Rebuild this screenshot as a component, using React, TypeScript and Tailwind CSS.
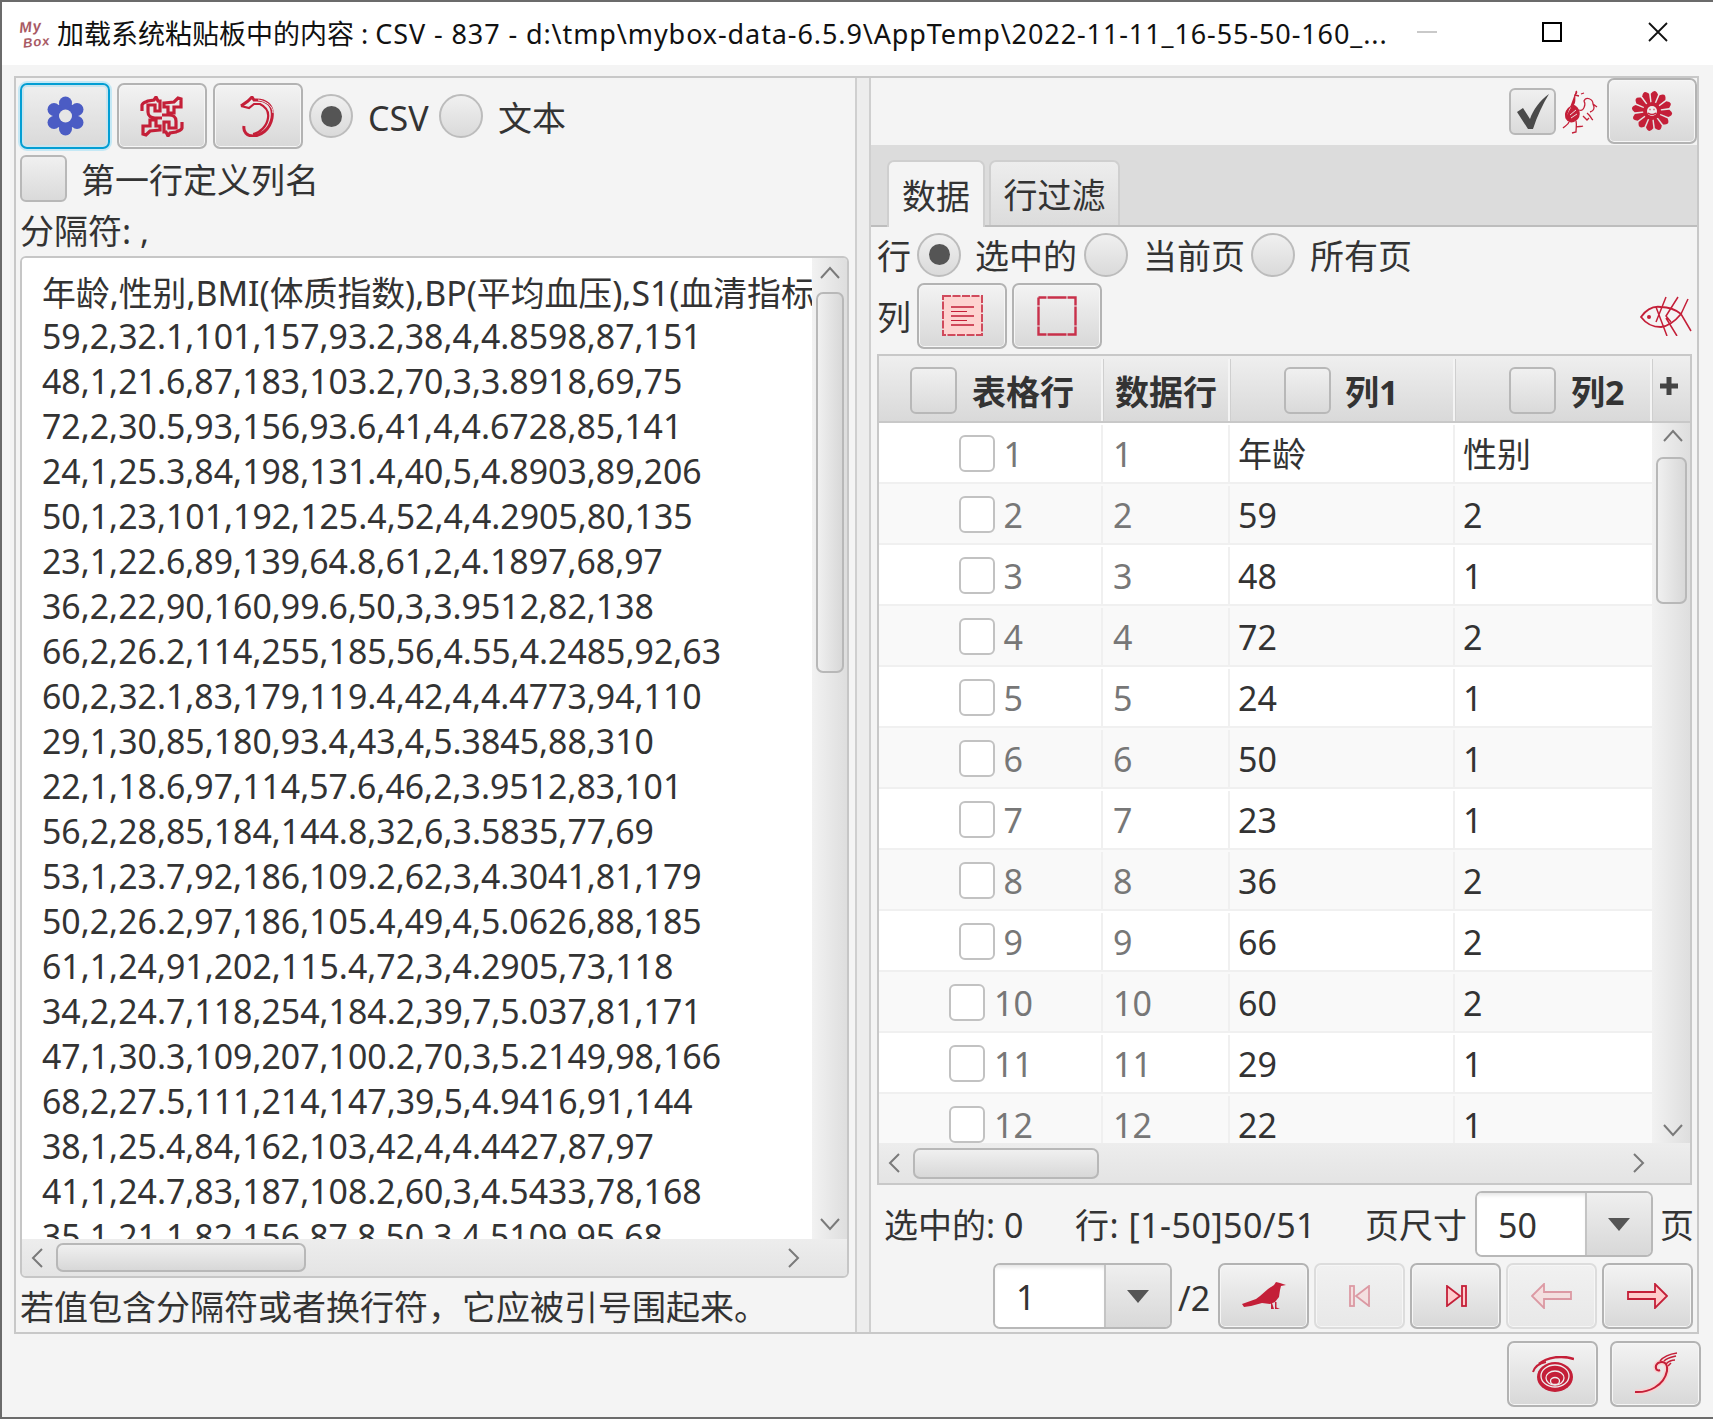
const RED = "#c41f38";

const csvLines = [
  "年龄,性别,BMI(体质指数),BP(平均血压),S1(血清指标,S2(低密度脂蛋白)",
  "59,2,32.1,101,157,93.2,38,4,4.8598,87,151",
  "48,1,21.6,87,183,103.2,70,3,3.8918,69,75",
  "72,2,30.5,93,156,93.6,41,4,4.6728,85,141",
  "24,1,25.3,84,198,131.4,40,5,4.8903,89,206",
  "50,1,23,101,192,125.4,52,4,4.2905,80,135",
  "23,1,22.6,89,139,64.8,61,2,4.1897,68,97",
  "36,2,22,90,160,99.6,50,3,3.9512,82,138",
  "66,2,26.2,114,255,185,56,4.55,4.2485,92,63",
  "60,2,32.1,83,179,119.4,42,4,4.4773,94,110",
  "29,1,30,85,180,93.4,43,4,5.3845,88,310",
  "22,1,18.6,97,114,57.6,46,2,3.9512,83,101",
  "56,2,28,85,184,144.8,32,6,3.5835,77,69",
  "53,1,23.7,92,186,109.2,62,3,4.3041,81,179",
  "50,2,26.2,97,186,105.4,49,4,5.0626,88,185",
  "61,1,24,91,202,115.4,72,3,4.2905,73,118",
  "34,2,24.7,118,254,184.2,39,7,5.037,81,171",
  "47,1,30.3,109,207,100.2,70,3,5.2149,98,166",
  "68,2,27.5,111,214,147,39,5,4.9416,91,144",
  "38,1,25.4,84,162,103,42,4,4.4427,87,97",
  "41,1,24.7,83,187,108.2,60,3,4.5433,78,168",
  "35,1,21.1,82,156,87.8,50,3,4.5109,95,68",
];

const tableRows = [
  ["年龄", "性别"],
  ["59", "2"],
  ["48", "1"],
  ["72", "2"],
  ["24", "1"],
  ["50", "1"],
  ["23", "1"],
  ["36", "2"],
  ["66", "2"],
  ["60", "2"],
  ["29", "1"],
  ["22", "1"],
];

function T({ children, className = "" }: { children: React.ReactNode; className?: string }) {
  return <span className={`pt-[3px] whitespace-nowrap ${className}`}>{children}</span>;
}

function Btn({
  children,
  focused,
  disabled,
  className = "",
}: {
  children?: React.ReactNode;
  focused?: boolean;
  disabled?: boolean;
  className?: string;
}) {
  let look = "border-[#b3b3b3] from-[#f3f3f3] to-[#d8d8d8] shadow-[inset_0_0_0_1px_#f6f6f6]";
  if (focused) look = "border-[#039ed3] from-[#efefef] to-[#d9d9d9] shadow-[0_0_0_2px_#c4e8f5,inset_0_0_0_2px_#c9e4ee]";
  if (disabled) look = "border-[#dcdcdc] from-[#f1f1f1] to-[#e8e8e8] shadow-[inset_0_0_0_1px_#f6f6f6]";
  return (
    <div className={`w-[91px] h-[66px] shrink-0 flex items-center justify-center rounded-[7px] border-[2.5px] bg-linear-to-b ${look} ${className}`}>
      <div className={disabled ? "opacity-40 flex" : "flex"}>{children}</div>
    </div>
  );
}

function Radio({ on }: { on?: boolean }) {
  return (
    <div className="w-[44px] h-[44px] shrink-0 rounded-full border-2 border-[#bcbcbc] bg-linear-to-b from-[#f0f0f0] to-[#dadada] flex items-center justify-center">
      {on && <div className="w-[21px] h-[21px] rounded-full bg-[#555555]" />}
    </div>
  );
}

function Check({ children, small, white }: { children?: React.ReactNode; small?: boolean; white?: boolean }) {
  return (
    <div
      className={`shrink-0 flex items-center justify-center border-2 rounded-[6px] ${small ? "w-[36px] h-[37px] border-[#c2c2c2]" : "w-[47px] h-[47px] border-[#b8b8b8]"} ${white ? "bg-white" : "bg-linear-to-b from-[#f0f0f0] to-[#dadada]"}`}
    >
      {children}
    </div>
  );
}

function Chevron({ dir }: { dir: "up" | "down" | "left" | "right" }) {
  const pts = {
    up: "1,12 10,2 19,12",
    down: "1,2 10,12 19,2",
    left: "12,1 3,10 12,19",
    right: "3,1 12,10 3,19",
  }[dir];
  const horizontal = dir === "left" || dir === "right";
  return (
    <svg width={horizontal ? 15 : 20} height={horizontal ? 20 : 14} viewBox={horizontal ? "0 0 15 20" : "0 0 20 14"} fill="none">
      <polyline points={pts} stroke="#7a7a7a" strokeWidth="2" />
    </svg>
  );
}

function Caret() {
  return (
    <svg width="24" height="14" viewBox="0 0 24 14">
      <polygon points="1,1 23,1 12,14" fill="#555555" />
    </svg>
  );
}

function Combo({ value, boxW }: { value: string; boxW: string }) {
  return (
    <div className={`h-[66px] flex rounded-[7px] border-2 border-[#b8b8b8] overflow-hidden ${boxW}`}>
      <div className="flex-1 bg-white pl-[21px] pt-[2px] flex items-center border-r-2 border-[#c4c4c4] shadow-[inset_0_4px_4px_-2px_#e2e2e2]">{value}</div>
      <div className="w-[64px] bg-linear-to-b from-[#efefef] to-[#d8d8d8] flex items-center justify-center">
        <Caret />
      </div>
    </div>
  );
}

function Gear() {
  return (
    <svg width="37" height="40" viewBox="0 0 37 40">
      <g fill="#4b5cc4">
        <circle cx="18.5" cy="20" r="13" />
        <circle cx="18.5" cy="7" r="6.5" />
        <circle cx="18.5" cy="33" r="6.5" />
        <circle cx="7" cy="13.5" r="6.5" />
        <circle cx="30" cy="13.5" r="6.5" />
        <circle cx="7" cy="26.5" r="6.5" />
        <circle cx="30" cy="26.5" r="6.5" />
      </g>
      <circle cx="18.5" cy="20" r="6.5" fill="#e6e6e6" />
    </svg>
  );
}

function Swirl() {
  const half = (
    <g>
      <path d="M2 15 L2 9 C3 6 6 6 8 5 L14 4 L16 1 L18 5 L20 5 L20 15 L15 15 L15 9 L8 9 L8 16 C8 20 11 22 15 22 L22 22" />
      <path d="M24 7 L34 6 L38 2 L41 3 L41 11 L34 11 L34 17 L28 17 L28 11 L24 11 Z" />
    </g>
  );
  return (
    <svg width="44" height="41" viewBox="0 0 44 41" fill="none" stroke={RED} strokeWidth="3.2">
      {half}
      <g transform="rotate(180 22 20.5)">{half}</g>
    </svg>
  );
}

function Dragon() {
  return (
    <svg width="36" height="41" viewBox="0 0 36 41" fill="none">
      <path d="M1 10 L8 5 L12 1 L14 4 C26 3 34 9 32 22 C30 34 20 40 13 40 C7 40 3 36 4 30" stroke={RED} strokeWidth="3" />
      <path d="M1 10 L9 12 L14 8 L20 8 C26 11 29 16 28 22 C27 30 20 37 13 38" stroke={RED} strokeWidth="2.2" />
      <path d="M18 4 C26 5 33 10 33 17" stroke="#eeeeee" strokeWidth="1" />
    </svg>
  );
}

function Flower() {
  const petals = Array.from({ length: 12 }, (_, i) => i * 30 + 8);
  return (
    <svg width="46" height="44" viewBox="0 0 46 44">
      {petals.map((a) => (
        <path key={a} transform={`rotate(${a} 23 22)`} d="M21.8 15 L19.3 5 Q23 -1.5 26.7 5 L24.2 15 Z" fill={RED} />
      ))}
      <circle cx="23" cy="22" r="9" fill={RED} />
      <circle cx="23" cy="22" r="5" fill="#ececec" />
      <path d="M19 24 Q23 27 27 24 M20.5 20.5 H21.5 M24.5 20.5 H25.5" stroke={RED} strokeWidth="1.4" fill="none" />
    </svg>
  );
}

function Rooster() {
  return (
    <svg width="36" height="44" viewBox="0 0 36 44" fill="none" stroke={RED} strokeWidth="1.3">
      <path d="M4 28 C2 22 6 18 11 15 C14 12 12 8 13 5 C15 3 15 2 14 1 M13 5 L17 6 M11 15 C18 18 19 26 14 30 C10 33 6 32 4 28 Z" fill={RED} />
      <path d="M8 25 L14 20 M9 28 L15 24" stroke="#f4f4f4" strokeWidth="0.9" />
      <path d="M17 20 C22 22 24 14 22 11 C24 6 31 9 31 14 C33 18 32 21 28 22 M31 14 L35 17 M25 23 C29 26 29 29 31 30 M21 26 L25 30 L27 28" />
      <path d="M14 31 C15 35 14 38 14 42 L10 43 M14 37 C17 36 19 37 21 36 M7 32 C6 35 3 36 1 38 M19 4 L22 3" />
    </svg>
  );
}

function ListIcon() {
  return (
    <svg width="41" height="41" viewBox="0 0 41 41">
      <rect x="1" y="1" width="39" height="39" fill="#fdd3d0" stroke="#d04a5c" strokeWidth="2" strokeDasharray="8 1.5" />
      <path d="M9 12 H32 M9 21 H32 M9 30 H32" stroke="#d04a5c" strokeWidth="2" />
      <path d="M9 16.5 H25 M9 25.5 H25" stroke={RED} strokeWidth="1" />
    </svg>
  );
}

function EmptyIcon() {
  return (
    <svg width="40" height="40" viewBox="0 0 40 40">
      <rect x="1.5" y="1.5" width="37" height="37" fill="none" stroke="#c8304a" strokeWidth="2.4" strokeDasharray="8 1 19 1 16 1 19 1 16 1 19 1 16 1 19 1 8 0" />
    </svg>
  );
}

function Fish() {
  return (
    <svg width="52" height="40" viewBox="0 0 52 40" fill="none" stroke={RED} strokeWidth="1.5">
      <path d="M1 21 C8 11 15 10 21 11 C30 11 36 14 41 18 C36 24 30 30 21 31 C13 31 7 29 1 21 Z" strokeWidth="1.8" />
      <circle cx="9" cy="21" r="2" fill={RED} stroke="none" />
      <path d="M26 1 L16 26 M38 1 L26 20 L31 26 M48 3 L41 18 M16 11 L27 40 M26 22 L37 40 M41 18 L51 35" />
    </svg>
  );
}

function Bird() {
  return (
    <svg width="44" height="29" viewBox="0 0 44 29" fill={RED}>
      <path d="M0 22 L14 17 L18 14 L26 7 L32 3 L34 0 L38 1 L44 3 L39 4 L38 8 L37 15 L33 20 L28 22 L20 21 L9 24 L2 25 Z" />
      <path d="M29 21 L29 27 L32 27 L30 21 Z M33 20 L33 27 L38 27 L34.5 25.5 L34.5 20 Z" />
    </svg>
  );
}

function FirstIcon() {
  return (
    <svg width="22" height="22" viewBox="0 0 22 22" fill="#fcc" stroke={RED} strokeWidth="1.8">
      <rect x="1" y="1" width="4" height="20" />
      <polygon points="20,1 20,21 7,11" />
    </svg>
  );
}

function LastIcon() {
  return (
    <svg width="22" height="22" viewBox="0 0 22 22" fill="#fcc" stroke={RED} strokeWidth="1.8">
      <polygon points="2,1 2,21 15,11" />
      <rect x="17" y="1" width="4" height="20" />
    </svg>
  );
}

function ArrowIcon({ left }: { left?: boolean }) {
  return (
    <svg width="41" height="26" viewBox="0 0 41 26" fill="#fcc" stroke={RED} strokeWidth="1.8">
      <polygon points={left ? "1,13 13,1 13,9 40,9 40,16 13,16 13,25" : "40,13 28,1 28,9 1,9 1,16 28,16 28,25"} />
    </svg>
  );
}

function Shell() {
  return (
    <svg width="42" height="37" viewBox="0 0 42 37" fill="none" stroke={RED}>
      <path d="M42 3 C30 -1 15 1 7 8" strokeWidth="2.5" />
      <ellipse cx="23" cy="21" rx="18" ry="15" fill={RED} stroke="none" />
      <path d="M1 16 C3 10 8 7 14 6" strokeWidth="2" />
      <ellipse cx="23" cy="20" rx="14" ry="11" stroke="#eeeeee" strokeWidth="1.3" />
      <ellipse cx="23" cy="22" rx="9" ry="7" stroke="#eeeeee" strokeWidth="1.3" />
      <ellipse cx="23" cy="25" rx="4.5" ry="3.5" stroke="#eeeeee" strokeWidth="1.3" />
    </svg>
  );
}

function Curl() {
  const stem = "M1 40 C14 41 30 34 33 19 C34 10 29 9 24 11 C20 14 22 20 26 18";
  return (
    <svg width="44" height="44" viewBox="0 0 44 44" fill="none">
      <path d={stem} stroke="#fbd0d0" strokeWidth="5" />
      <path d={stem} stroke={RED} strokeWidth="2" />
      <path d="M26 9 C30 4 36 2 43 1 M30 9 C33 6 38 5 42 4 M32 12 C35 9 38 8 41 8 M34 14 L37 11" stroke={RED} strokeWidth="1.5" />
    </svg>
  );
}

function VBar({ thumbH, thumbW, topPad, bottomPad, arrowX = "" }: { thumbH: string; thumbW: string; topPad: string; bottomPad: string; arrowX?: string }) {
  return (
    <div className="h-full bg-linear-to-r from-[#f2f2f2] to-[#dedede] flex flex-col items-center">
      <div className={`h-[26px] flex justify-center ${topPad} ${arrowX}`}>
        <Chevron dir="up" />
      </div>
      <div className={`mt-[8px] ${thumbH} ${thumbW} shrink-0 rounded-[7px] border-2 border-[#b8b8b8] bg-linear-to-r from-[#f0f0f0] to-[#d8d8d8]`} />
      <div className={`mt-auto flex justify-center ${bottomPad} ${arrowX}`}>
        <Chevron dir="down" />
      </div>
    </div>
  );
}

function HBar({ thumbW, thumbH, rightPad }: { thumbW: string; thumbH: string; rightPad: string }) {
  return (
    <div className={`h-full bg-linear-to-b from-[#ededed] to-[#e4e4e4] flex items-center pl-[8px] ${rightPad}`}>
      <Chevron dir="left" />
      <div className={`ml-[11px] ${thumbW} ${thumbH} rounded-[7px] border-2 border-[#b8b8b8] bg-linear-to-b from-[#f0f0f0] to-[#d8d8d8]`} />
      <div className="ml-auto flex">
        <Chevron dir="right" />
      </div>
    </div>
  );
}

function LeftPane() {
  return (
    <div className="w-[839px] shrink-0 pl-[4px] pt-[5px] flex flex-col">
      <div className="h-[66px] flex items-center">
        <Btn focused className="w-[90px]!">
          <Gear />
        </Btn>
        <Btn className="ml-[7px] w-[90px]!">
          <Swirl />
        </Btn>
        <Btn className="ml-[6px] w-[90px]!">
          <Dragon />
        </Btn>
        <div className="ml-[6px]">
          <Radio on />
        </div>
        <T className="ml-[15px] w-[71px]">CSV</T>
        <Radio />
        <T className="ml-[15px]">文本</T>
      </div>
      <div className="mt-[6px] h-[47px] flex items-center">
        <Check />
        <T className="ml-[14px]">第一行定义列名</T>
      </div>
      <div className="h-[54px] flex items-center pt-[4px]">分隔符: ,</div>
      <div className="w-[829px] h-[1022px] rounded-[6px] border-2 border-[#c6c6c6] overflow-hidden flex flex-col">
        <div className="h-[981px] flex">
          <div className="w-[790px] bg-white pl-[20px] pt-[11px] overflow-hidden whitespace-nowrap text-[33.85px] leading-[45px]">
            {csvLines.map((line, i) => (
              <div key={i} className={i === 0 ? "h-[45px] pt-[2px]" : ""}>
                {line}
              </div>
            ))}
          </div>
          <div className="w-[35px]">
            <VBar thumbH="h-[381px]" thumbW="w-[28px]" topPad="pt-[8px]" bottomPad="pb-[8px]" />
          </div>
        </div>
        <div className="h-[39px]">
          <HBar thumbW="w-[250px]" thumbH="h-[29px]" rightPad="pr-[46px]" />
        </div>
      </div>
      <div className="h-[54px] flex items-center pt-[4px]">若值包含分隔符或者换行符，它应被引号围起来。</div>
    </div>
  );
}

function HeadCell({ className, children }: { className: string; children: React.ReactNode }) {
  return (
    <div className={`h-full shrink-0 flex items-center border-r-2 border-[#f4f4f4] shadow-[1px_0_0_#cfcfcf] font-bold ${className}`}>
      {children}
    </div>
  );
}

function DataTable() {
  return (
    <div className="ml-[6px] mt-[6px] w-[815px] h-[831px] border-2 border-[#c8c8c8] flex flex-col">
      <div className="h-[67px] flex bg-linear-to-b from-[#efefef] to-[#d9d9d9] border-b-2 border-[#c8c8c8] pt-[3px]">
        <HeadCell className="w-[224px] pl-[31px]">
          <Check />
          <T className="ml-[15px]">表格行</T>
        </HeadCell>
        <HeadCell className="w-[127px] pl-[12px]">
          <T>数据行</T>
        </HeadCell>
        <HeadCell className="w-[225px] pl-[54px]">
          <Check />
          <T className="ml-[14px]">列1</T>
        </HeadCell>
        <HeadCell className="w-[197px] pl-[54px]">
          <Check />
          <T className="ml-[15px]">列2</T>
        </HeadCell>
        <div className="w-[34px] flex justify-center pt-[18px]">
          <svg width="18" height="18" viewBox="0 0 18 18">
            <path d="M6.5 0 H11.5 V6.5 H18 V11.5 H11.5 V18 H6.5 V11.5 H0 V6.5 H6.5 Z" fill="#444444" />
          </svg>
        </div>
      </div>
      <div className="h-[720px] flex">
        <div className="w-[773px] overflow-hidden">
          {tableRows.map((r, i) => (
            <div key={i} className={`h-[61px] flex shrink-0 border-b-2 border-[#f0f0f0] pt-[2px] ${i % 2 ? "bg-[#f9f9f9]" : "bg-white"}`}>
              <div className="w-[224px] shrink-0 flex items-center justify-center gap-[9px] border-r-2 border-[#f0f0f0] text-[#777777] pl-[1px]">
                <Check small white />
                <span className={i + 1 < 10 ? "w-[19px]" : "w-[38px]"}>{i + 1}</span>
              </div>
              <div className="w-[127px] shrink-0 flex items-center pl-[10px] border-r-2 border-[#f0f0f0] text-[#777777]">{i + 1}</div>
              <div className="w-[225px] shrink-0 flex items-center pl-[8px] border-r-2 border-[#f0f0f0]">{r[0]}</div>
              <div className="flex-1 flex items-center pl-[8px]">{r[1]}</div>
            </div>
          ))}
        </div>
        <div className="w-[38px]">
          <VBar thumbH="h-[147px]" thumbW="w-[31px]" topPad="pt-[6px]" bottomPad="pb-[6px]" arrowX="ml-[4px]" />
        </div>
      </div>
      <div className="h-[40px]">
        <HBar thumbW="w-[186px]" thumbH="h-[31px]" rightPad="pr-[44px]" />
      </div>
    </div>
  );
}

function RightPane() {
  return (
    <div className="w-[826px] shrink-0 flex flex-col">
      <div className="h-[67px] flex justify-end items-start">
        <div className="mt-[10px]">
          <Check>
            <svg width="32" height="35" viewBox="0 0 32 35">
              <path d="M0 18 L6 14 L13 25 C16 16 23 6 32 0 C26 10 20 22 16 35 L11 35 Z" fill="#4a4a4a" />
            </svg>
          </Check>
        </div>
        <div className="ml-[6px] mr-[9px] mt-[12px]">
          <Rooster />
        </div>
        <Btn className="w-[90px]!">
          <Flower />
        </Btn>
      </div>
      <div className="h-[82px] bg-[#dcdcdc] border-b-2 border-[#bdbdbd] pl-[16px] flex items-end">
        <div className="w-[98px] h-[67px] -mb-[2px] pt-[2px] rounded-t-[7px] border-x-2 border-t-2 border-[#cfcfcf] bg-[#f4f4f4] flex items-center justify-center">数据</div>
        <div className="ml-[4px] w-[131px] h-[65px] pt-[2px] rounded-t-[7px] border-x-2 border-t-2 border-[#cfcfcf] bg-linear-to-b from-[#ededed] to-[#dcdcdc] flex items-center justify-center">行过滤</div>
      </div>
      <div className="mt-[5px] h-[45px] flex items-center pl-[6px]">
        <T className="w-[40px]">行</T>
        <Radio on />
        <T className="ml-[14px] w-[109px]">选中的</T>
        <Radio />
        <T className="ml-[15px] w-[108px]">当前页</T>
        <Radio />
        <T className="ml-[15px]">所有页</T>
      </div>
      <div className="mt-[6px] h-[65px] flex items-center pl-[6px]">
        <T className="w-[40px]">列</T>
        <Btn className="w-[90px]!">
          <ListIcon />
        </Btn>
        <Btn className="ml-[5px] w-[90px]!">
          <EmptyIcon />
        </Btn>
        <div className="ml-auto mr-[5px] flex">
          <Fish />
        </div>
      </div>
      <DataTable />
      <div className="mt-[6px] h-[65px] flex items-center pl-[13px]">
        <T className="w-[191px]">选中的: 0</T>
        <T className="w-[290px] tracking-[0.5px]">行: [1-50]50/51</T>
        <T className="w-[110px]">页尺寸</T>
        <Combo value="50" boxW="w-[178px]" />
        <T className="ml-[7px]">页</T>
      </div>
      <div className="mt-[7px] h-[66px] flex items-center pl-[122px]">
        <Combo value="1" boxW="w-[179px]" />
        <T className="ml-[6px] w-[40px]">/2</T>
        <Btn>
          <Bird />
        </Btn>
        <Btn disabled className="ml-[5px]">
          <FirstIcon />
        </Btn>
        <Btn className="ml-[5px]">
          <LastIcon />
        </Btn>
        <Btn disabled className="ml-[5px]">
          <ArrowIcon left />
        </Btn>
        <Btn className="ml-[5px]">
          <ArrowIcon />
        </Btn>
      </div>
    </div>
  );
}

export default function App() {
  return (
    <div className="w-[1713px] h-[1419px] border-2 border-r-0 border-[#6b6b6b] bg-[#f4f4f4] text-[#333333] text-[34px] leading-none [font-family:'Noto_Sans','Noto_Sans_CJK_SC',sans-serif] flex flex-col overflow-hidden">
      {/* title bar */}
      <div className="h-[63px] shrink-0 bg-white flex items-center text-[#111111] text-[27px]">
        <div className="ml-[18px] w-[37px] leading-[15px] text-[15px] italic font-bold tracking-[1px] text-[#a85a64] [font-family:'Liberation_Sans',sans-serif] -rotate-6">
          My
          <br />
          <span className="ml-[2px] text-[13px]">Box</span>
        </div>
        <span className="whitespace-nowrap">
          加载系统粘贴板中的内容 :{" "}
          <span className="tracking-[0.9px]">CSV - 837 - d:\tmp\mybox-data-6.5.9\AppTemp\2022-11-11_16-55-50-160_...</span>
        </span>
        <div className="ml-auto mb-[4px] flex items-center">
          <div className="w-[20px] h-[2px] bg-[#c9c9c9]" />
          <div className="ml-[105px] w-[20px] h-[20px] border-2 border-black" />
          <svg className="ml-[86px] mr-[45px]" width="20" height="20" viewBox="0 0 20 20">
            <path d="M1 1 L19 19 M19 1 L1 19" stroke="#111111" strokeWidth="1.8" />
          </svg>
        </div>
      </div>

      {/* split pane */}
      <div className="mt-[11px] ml-[12px] w-[1685px] h-[1258px] shrink-0 border-2 border-[#c8c8c8] flex">
        <LeftPane />
        <div className="w-[16px] shrink-0 bg-[#ededed] border-x-2 border-[#cfcfcf]" />
        <RightPane />
      </div>

      {/* bottom buttons */}
      <div className="mt-[7px] flex justify-end pr-[12px]">
        <Btn>
          <Shell />
        </Btn>
        <Btn className="ml-[12px]">
          <Curl />
        </Btn>
      </div>
    </div>
  );
}
